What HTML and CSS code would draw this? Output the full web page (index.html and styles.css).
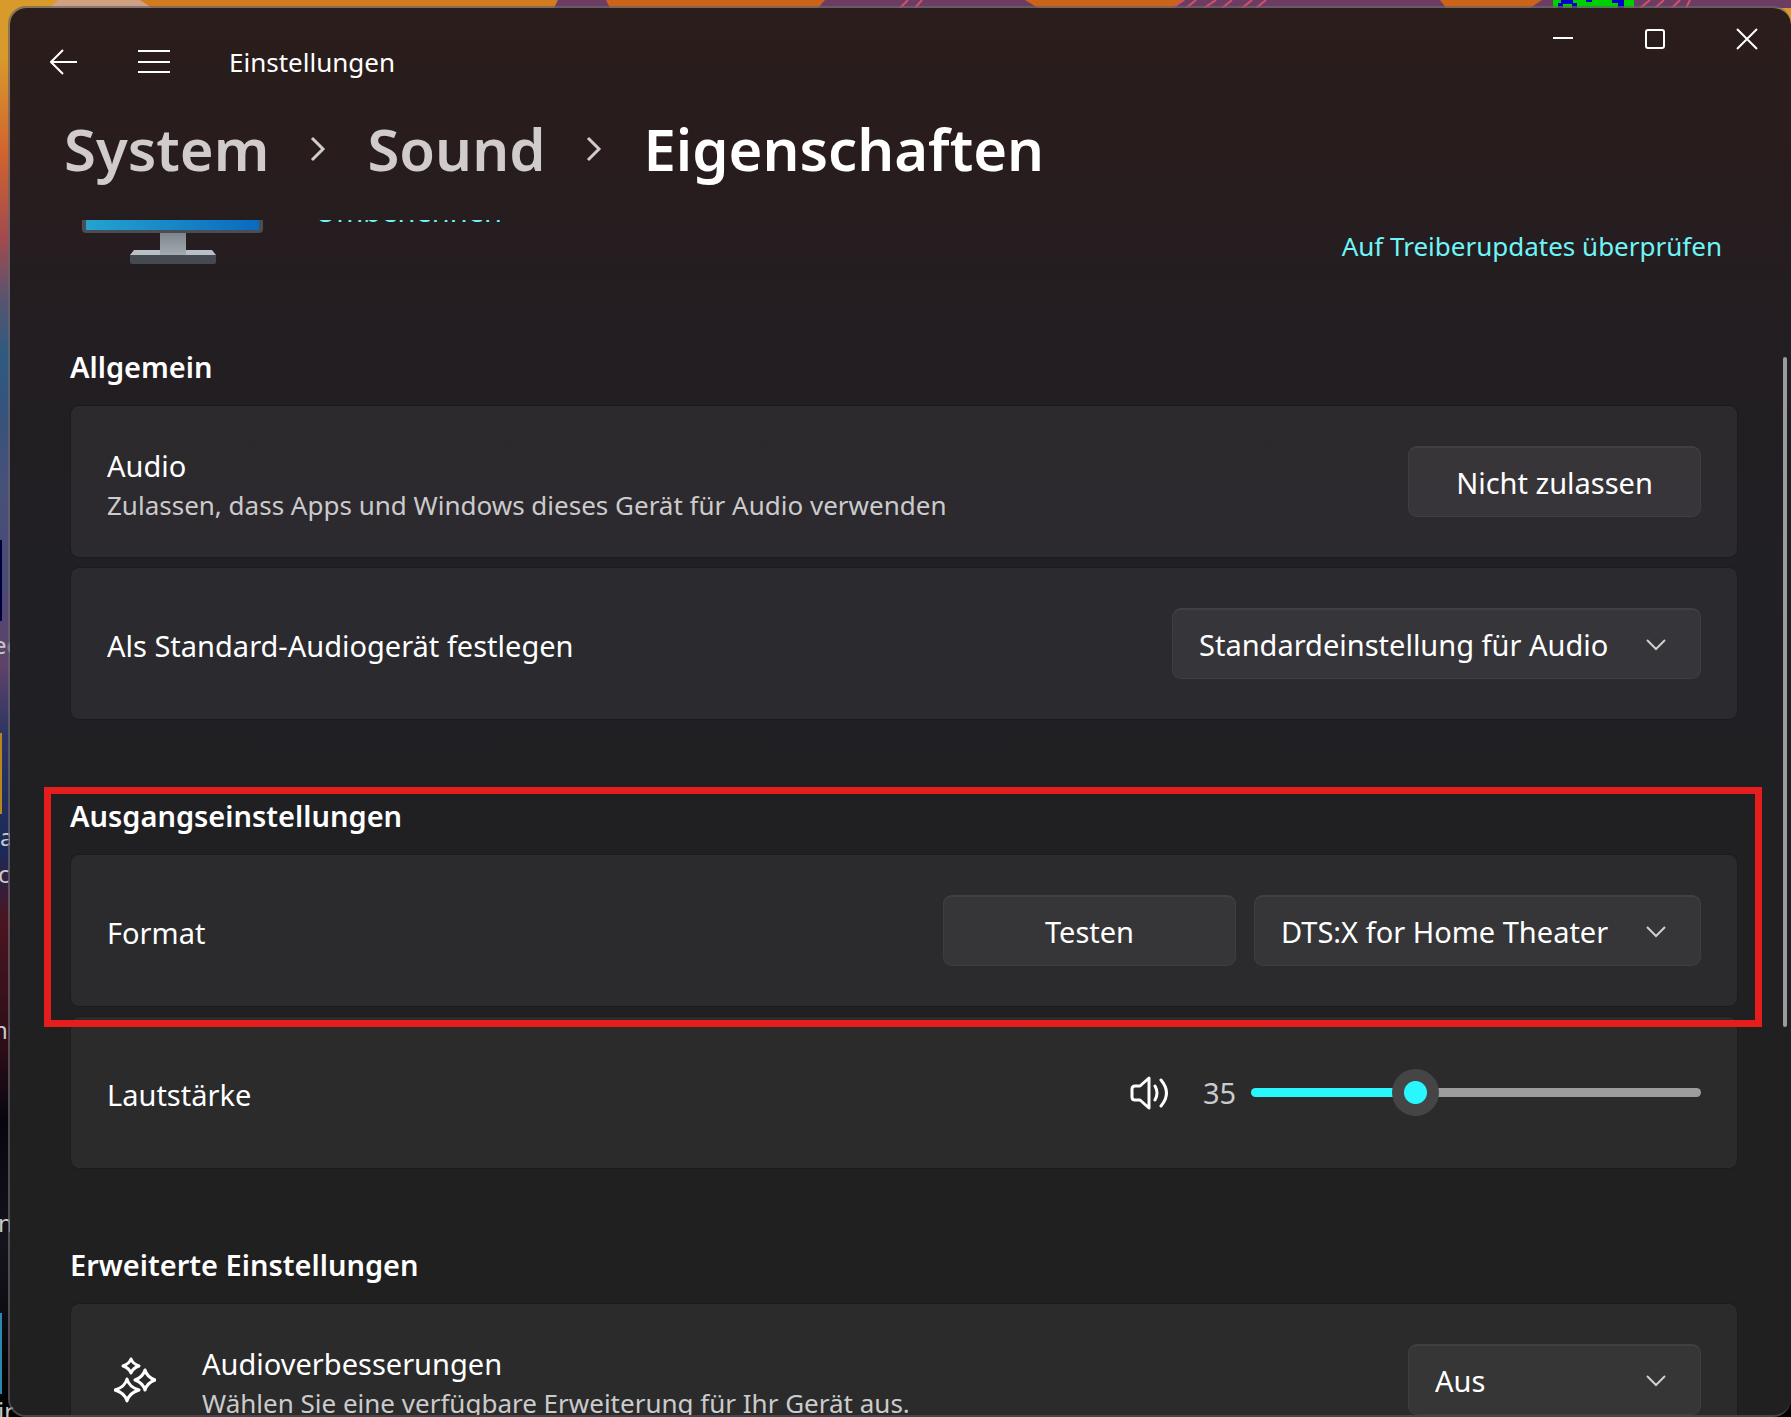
FILE: index.html
```
<!DOCTYPE html>
<html lang="de">
<head>
  <meta charset="UTF-8" />
  <meta name="viewport" content="width=device-width, initial-scale=1.0" />
  <title>Einstellungen</title>
  <link rel="stylesheet" href="styles.css">
</head>
<body>
  <!-- Desktop behind the window -->
  <div class="desktop" aria-hidden="true">
    <svg class="wallpaper-top" viewBox="0 0 1791 8" preserveAspectRatio="none">
      <rect width="1791" height="8" fill="#6d3c63"/>
      <path d="M0 0H558L554 8H0Z" fill="#d27a1e"/>
      <path d="M0 0H60L50 8H0Z" fill="#d99a2c"/>
      <path d="M58 0H140L152 8H50Z" fill="#d0a083"/>
      <path d="M606 0H825L818 8H610Z" fill="#cb6418"/>
      <path d="M1025 0H1185L1170 8H1038Z" fill="#cb6418"/>
      <path d="M1440 0H1542L1530 8H1446Z" fill="#cb6418"/>
      <path d="M900 8L908 0M915 8L922 0M1172 8L1184 0M1186 8L1196 0M1204 8L1216 0M1222 8L1232 0M1242 8L1252 0M1256 8L1266 0M1640 8L1650 0M1655 8L1664 0M1672 8L1680 0M1686 8L1690 0" stroke="#d4506a" stroke-width="2"/>
    </svg>
    <svg class="counter" viewBox="0 0 81 8">
      <rect width="81" height="8" fill="#00d000"/>
      <path d="M8 0h12v3h4v5h-5V4h-9v4H5V3h3zM33 0h6v2h-6zM59 0h12v8h-6V3h-6z" fill="#0000c8"/>
    </svg>
    <span class="tile tile-navy"></span>
    <span class="tile tile-gold"></span>
    <span class="tile tile-blue"></span>
    <span class="icon-label label-1">ec</span>
    <span class="icon-label label-2">a</span>
    <span class="icon-label label-3">c</span>
    <span class="icon-label label-4">nr</span>
    <span class="icon-label label-5">n</span>
    <span class="icon-label label-6">ir</span>
  </div>

  <main class="window">
    <header class="titlebar">
      <div class="titlebar-nav">
        <button class="icon-btn" aria-label="Zurück">
          <svg viewBox="0 0 28 26" width="28" height="26"><path d="M27 13H2M13 1L1 13L13 25"/></svg>
        </button>
        <button class="icon-btn menu-btn" aria-label="Navigation öffnen">
          <svg viewBox="0 0 34 24" width="34" height="24"><path d="M1 1H33M1 12H33M1 22H33"/></svg>
        </button>
        <span class="app-name">Einstellungen</span>
      </div>
      <div class="window-controls">
        <button aria-label="Minimieren">
          <svg viewBox="0 0 22 22" width="22" height="22"><path d="M1 10H21"/></svg>
        </button>
        <button aria-label="Maximieren">
          <svg viewBox="0 0 22 22" width="22" height="22"><rect x="2" y="2" width="18" height="18" rx="2"/></svg>
        </button>
        <button aria-label="Schließen">
          <svg viewBox="0 0 22 22" width="22" height="22"><path d="M1 1L21 21M21 1L1 21"/></svg>
        </button>
      </div>
    </header>

    <nav class="breadcrumb" aria-label="Pfad">
      <a href="#system">System</a>
      <svg viewBox="0 0 16 26" width="16" height="26"><path d="M2 2L13 13L2 24"/></svg>
      <a href="#sound">Sound</a>
      <svg viewBox="0 0 16 26" width="16" height="26"><path d="M2 2L13 13L2 24"/></svg>
      <h1>Eigenschaften</h1>
    </nav>

    <div class="content">
      <div class="device">
        <svg class="monitor" viewBox="0 0 182 44" width="182" height="44">
          <defs>
            <linearGradient id="screen" x1="0" x2="1" y1="0" y2="0">
              <stop offset="0" stop-color="#25a3cf"/>
              <stop offset="1" stop-color="#0a6abf"/>
            </linearGradient>
            <linearGradient id="neck" x1="0" x2="0" y1="0" y2="1">
              <stop offset="0" stop-color="#7d848c"/>
              <stop offset="1" stop-color="#a4abb3"/>
            </linearGradient>
          </defs>
          <path d="M0 0H181V9Q181 13 177 13H4Q0 13 0 9Z" fill="#4a4d53"/>
          <rect x="4" width="173" height="10" fill="url(#screen)"/>
          <path d="M52 30H130L134 35H48Z" fill="#b9bfc6"/>
          <rect x="78" y="13" width="26" height="22" fill="url(#neck)"/>
          <path d="M48 35H134V42Q134 44 132 44H50Q48 44 48 42Z" fill="#454a51"/>
        </svg>
        <a class="rename" href="#umbenennen">Umbenennen</a>
        <a class="driver-link" href="#treiber">Auf Treiberupdates überprüfen</a>
      </div>

      <section>
        <h2>Allgemein</h2>
        <div class="card">
          <div class="card-text">
            <span class="name">Audio</span>
            <span class="hint">Zulassen, dass Apps und Windows dieses Gerät für Audio verwenden</span>
          </div>
          <button class="btn">Nicht zulassen</button>
        </div>
        <div class="card">
          <div class="card-text">
            <label class="name" for="standard">Als Standard-Audiogerät festlegen</label>
          </div>
          <div class="select">
            <select id="standard"><option>Standardeinstellung für Audio</option></select>
            <svg viewBox="0 0 20 12" width="20" height="12"><path d="M1 1L10 10L19 1"/></svg>
          </div>
        </div>
      </section>

      <section>
        <div class="marked">
          <h2>Ausgangseinstellungen</h2>
          <div class="card">
            <div class="card-text">
              <label class="name" for="format">Format</label>
            </div>
            <button class="btn">Testen</button>
            <div class="select">
              <select id="format"><option>DTS:X for Home Theater</option></select>
              <svg viewBox="0 0 20 12" width="20" height="12"><path d="M1 1L10 10L19 1"/></svg>
            </div>
          </div>
        </div>
        <div class="card">
          <div class="card-text">
            <label class="name" for="volume">Lautstärke</label>
          </div>
          <div class="volume">
            <button class="icon-btn" aria-label="Stummschalten">
              <svg class="speaker" viewBox="0 0 40 34" width="40" height="34"><path d="M20 2V32L11 24H6Q3 24 3 21V13Q3 10 6 10H11ZM26 10Q30 17 26 24M32 4Q43 17 32 30"/></svg>
            </button>
            <output for="volume">35</output>
            <input type="range" id="volume" min="0" max="100" value="35" />
          </div>
        </div>
      </section>

      <section>
        <h2>Erweiterte Einstellungen</h2>
        <div class="card">
          <svg class="card-icon" viewBox="0 0 42 46" width="42" height="46">
            <path d="M17 2Q19 7 25 9Q19 11 17 16Q15 11 9 9Q15 7 17 2Z"/>
            <path d="M31 13Q33 20 41 23Q33 26 31 33Q29 26 21 23Q29 20 31 13Z"/>
            <path d="M13 22Q15 30 25 33Q15 36 13 44Q11 36 1 33Q11 30 13 22Z"/>
          </svg>
          <div class="card-text">
            <label class="name" for="enhance">Audioverbesserungen</label>
            <span class="hint">Wählen Sie eine verfügbare Erweiterung für Ihr Gerät aus.</span>
          </div>
          <div class="select">
            <select id="enhance"><option>Aus</option></select>
            <svg viewBox="0 0 20 12" width="20" height="12"><path d="M1 1L10 10L19 1"/></svg>
          </div>
        </div>
      </section>
    </div>
    <div class="scrollbar"></div>
  </main>
</body>
</html>
```
FILE: styles.css
```
* {
  box-sizing: border-box;
}

body {
  font-family: "Noto Sans", "Open Sans", sans-serif;
  font-size: 29px;
  color: #fff;
  margin: 0;
  height: 100vh;
  padding: 6px 0 0 8px;
  position: relative;
  overflow: hidden;
  background: #0a0a12;
}

button, select, input {
  font: inherit;
  color: inherit;
  margin: 0;
}

svg {
  display: block;
  flex: none;
}

a {
  color: #6ff5f7;
  text-decoration: none;
}

/* desktop */
.desktop {
  position: absolute;
  inset: 0;
  overflow: hidden;
  background: linear-gradient(180deg,
    #d99a2c 0, #d99a2c 4%, #d0622f 11%, #a04a4e 17%, #59546f 21%, #2f5a80 25%,
    #35537c 29%, #46517a 34%, #4a4a76 41%, #5e4269 47%, #2b3561 52%,
    #1c2a58 60%, #4a1520 65%, #2c0d18 74%, #07060f 79%, #14141c 88%, #000 100%);
}

.wallpaper-top {
  width: 100%;
  height: 8px;
}

.counter {
  position: absolute;
  top: 0;
  right: 157px;
  width: 81px;
  height: 8px;
}

.tile {
  position: absolute;
  left: 0;
  width: 2px;
  height: 81px;
}

.tile-navy { top: 540px; background: #00003c; }
.tile-gold { top: 733px; background: #b8861f; }
.tile-blue { top: 1313px; background: #2a87ad; }

.icon-label {
  position: absolute;
  left: -7px;
  font-size: 24px;
  line-height: 34px;
  color: #c8c8c8;
}

.label-1 { top: 628px; }
.label-2 { top: 820px; left: 0; }
.label-3 { top: 857px; left: -2px; }
.label-4 { top: 1013px; }
.label-5 { top: 1206px; left: -2px; }
.label-6 { top: 1394px; left: -2px; }

/* window */
.window {
  position: relative;
  height: 100%;
  display: flex;
  flex-direction: column;
  border: 2px solid rgba(105, 100, 108, 0.7);
  border-right: 0;
  border-radius: 18px;
  overflow: hidden;
  background: linear-gradient(180deg,
    #2a1d1b 0, #281c1d 10%, #251d20 17%, #221e22 26%, #202024 45%, #202023 62%, #202020 82%);
  background-clip: padding-box;
}

.titlebar {
  display: flex;
  justify-content: space-between;
  align-items: flex-start;
  height: 101px;
}

.titlebar-nav {
  display: flex;
  align-items: center;
  height: 46px;
  margin: 31px 0 0 40px;
}

.icon-btn, .window-controls button {
  background: none;
  border: 0;
  padding: 0;
}

.icon-btn svg, .window-controls svg {
  fill: none;
  stroke: #fff;
  stroke-width: 2;
}

.menu-btn {
  margin: 0 58px 0 59px;
}

.app-name {
  font-size: 26px;
}

.window-controls {
  display: flex;
  gap: 4px;
}

.window-controls button {
  display: grid;
  place-items: center;
  width: 88px;
  height: 62px;
}

.breadcrumb {
  display: flex;
  align-items: center;
  gap: 41px;
  height: 80px;
  margin: 0 0 31px 54px;
  font-size: 58px;
  font-weight: 600;
  line-height: 80px;
}

.breadcrumb a {
  color: #cfcccb;
}

.breadcrumb h1 {
  font: inherit;
  margin: 0;
}

.breadcrumb svg {
  fill: none;
  stroke: #cfcccb;
  stroke-width: 3;
}

.content {
  flex: 1;
  overflow: hidden;
  padding: 0 53px 0 60px;
}

.device {
  display: flex;
  align-items: flex-end;
  height: 44px;
  margin-bottom: 83px;
  padding: 0 16px 0 12px;
  line-height: 36px;
}

.rename {
  margin: 0 auto 35px 51px;
}

.driver-link {
  font-size: 26px;
}

h2 {
  font-size: 29px;
  font-weight: 600;
  line-height: 40px;
  margin: 76px 0 18px;
}

.card {
  display: flex;
  align-items: center;
  gap: 18px;
  height: 153px;
  padding: 0 36px;
  border: 1px solid rgba(0, 0, 0, 0.15);
  border-radius: 9px;
  background: rgba(255, 255, 255, 0.05);
  background-clip: padding-box;
}

.card + .card, .marked + .card {
  margin-top: 9px;
}

.card-text {
  display: flex;
  flex-direction: column;
  margin-right: auto;
  padding-top: 4px;
}

.card-icon {
  fill: none;
  stroke: #fff;
  stroke-width: 3;
  stroke-linejoin: round;
  margin: 0 28px 0 7px;
}

.name {
  line-height: 42px;
}

.hint {
  font-size: 26px;
  line-height: 36px;
  color: #cbcbcc;
}

.btn, .select select {
  min-width: 293px;
  height: 71px;
  border: 1px solid rgba(255, 255, 255, 0.04);
  border-top: 2px solid rgba(255, 255, 255, 0.05);
  border-radius: 9px;
  background: rgba(255, 255, 255, 0.055);
}

.select {
  position: relative;
}

.select select {
  appearance: none;
  padding: 0 91px 0 26px;
}

.select svg {
  position: absolute;
  right: 35px;
  top: 31px;
  pointer-events: none;
  fill: none;
  stroke: #cfcfcf;
  stroke-width: 2;
}

/* red highlight frame */
.marked {
  position: relative;
}

.marked::after {
  content: "";
  position: absolute;
  inset: -9px -24px -20px -26px;
  border: 7px solid #e51d1d;
  z-index: 1;
  pointer-events: none;
}

.volume {
  display: flex;
  align-items: center;
}

.volume .speaker {
  stroke-width: 3;
  stroke-linecap: round;
  stroke-linejoin: round;
}

.volume output {
  width: 34px;
  margin: 0 14px 0 34px;
  color: #cbcbcc;
}

.volume input {
  appearance: none;
  width: 450px;
  height: 47px;
  background: none;
}

.volume input::-webkit-slider-runnable-track {
  height: 9px;
  border-radius: 5px;
  background: linear-gradient(90deg, #29f6fd 36%, #9d9d9d 36%);
}

.volume input::-webkit-slider-thumb {
  appearance: none;
  width: 47px;
  height: 47px;
  margin-top: -19px;
  border-radius: 50%;
  background: radial-gradient(circle, #29f6fd 11px, #454545 12px);
}

.scrollbar {
  position: absolute;
  top: 349px;
  right: 4px;
  width: 4px;
  height: 670px;
  border-radius: 2px;
  background: #9b9a9c;
}
```
